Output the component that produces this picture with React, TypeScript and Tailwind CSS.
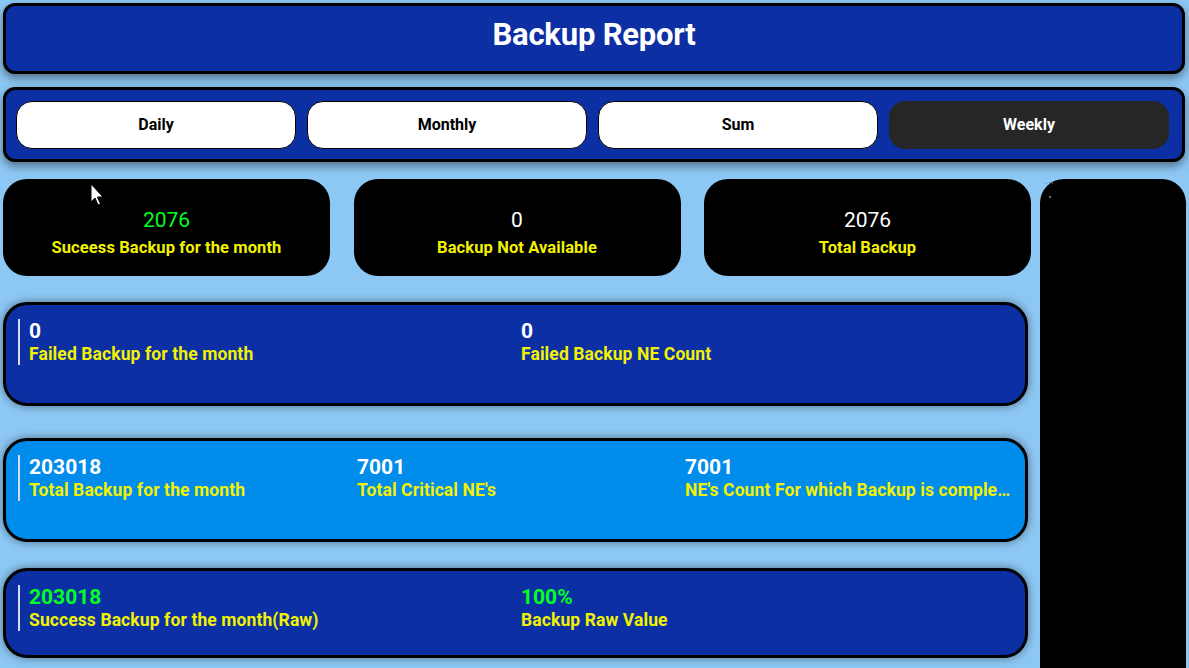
import React from "react";

const font = { fontFamily: "Roboto, 'Open Sans', 'Liberation Sans', sans-serif" };

function Kpi({ value, label, green }: { value: string; label: string; green?: boolean }) {
  return (
    <div className="w-[327px] h-[97px] bg-black rounded-[24px] flex flex-col items-center justify-center pt-[6px]">
      <div className={`text-[21px] leading-[26px] mt-[4px] ${green ? "text-[#00ff22]" : "text-white"}`}>{value}</div>
      <div className="text-[16.5px] leading-[20px] font-bold text-[#f2f200] mt-[5px] tracking-[0.1px]">{label}</div>
    </div>
  );
}

function Item({ value, label, green }: { value: string; label: string; green?: boolean }) {
  return (
    <div className="min-w-0">
      <div className={`text-[21px] leading-[24px] font-bold ${green ? "text-[#00ff22]" : "text-white"}`}>{value}</div>
      <div className="text-[17.5px] leading-[22px] font-bold text-[#f2f200] truncate tracking-[0.1px]">{label}</div>
    </div>
  );
}

function Panel({
  bg,
  h,
  cols,
  items,
}: {
  bg: string;
  h: string;
  cols: string;
  items: { value: string; label: string; green?: boolean }[];
}) {
  return (
    <div className={`${bg} ${h} w-[1025px] border-[3px] border-black rounded-[24px] shadow-[0_0_10px_rgba(0,0,0,0.45)] pl-[12px] pt-[14px] pr-[12px]`}>
      <div className="flex">
        <div className="w-[2px] h-[46px] bg-[#d8dcf0] shrink-0" />
        <div className={`grid ${cols} flex-1 pl-[9px]`}>
          {items.map((it, i) => (
            <Item key={i} {...it} />
          ))}
        </div>
      </div>
    </div>
  );
}

function Tab({ label, active }: { label: string; active?: boolean }) {
  return (
    <div
      className={`w-[280px] h-[48px] rounded-[16px] flex items-center justify-center text-[16px] font-bold ${
        active ? "bg-[#262626] text-white" : "bg-white text-black border border-black"
      }`}
    >
      {label}
    </div>
  );
}

export default function App() {
  return (
    <div style={font} className="w-[1189px] h-[668px] bg-[#8dc8f4] overflow-hidden relative p-[3px]">
      <div className="h-[71px] w-[1182px] bg-[#0c2fa3] border-[3px] border-black rounded-[12px] flex items-center justify-center pb-[6px] shadow-[0_4px_10px_rgba(0,0,0,0.45)]">
        <h1 className="text-white font-bold text-[31px] tracking-[-0.2px]">Backup Report</h1>
      </div>
      <div className="mt-[13px] h-[75px] w-[1182px] bg-[#0c2fa3] border-[3px] border-black rounded-[12px] flex items-center pl-[10px] gap-[11px] shadow-[0_4px_10px_rgba(0,0,0,0.45)]">
        <Tab label="Daily" />
        <Tab label="Monthly" />
        <Tab label="Sum" />
        <Tab label="Weekly" active />
      </div>
      <div className="mt-[17px] flex gap-[9px]">
        <div className="w-[1028px] flex flex-col">
          <div className="flex justify-between">
            <Kpi value="2076" label="Suceess Backup for the month" green />
            <Kpi value="0" label="Backup Not Available" />
            <Kpi value="2076" label="Total Backup" />
          </div>
          <div className="mt-[26px]">
            <Panel
              bg="bg-[#0c2fa3]"
              h="h-[104px]"
              cols="grid-cols-[492px_1fr]"
              items={[
                { value: "0", label: "Failed Backup for the month" },
                { value: "0", label: "Failed Backup NE Count" },
              ]}
            />
          </div>
          <div className="mt-[32px]">
            <Panel
              bg="bg-[#008ceb]"
              h="h-[104px]"
              cols="grid-cols-[328px_328px_1fr]"
              items={[
                { value: "203018", label: "Total Backup for the month" },
                { value: "7001", label: "Total Critical NE's" },
                { value: "7001", label: "NE's Count For which Backup is completed" },
              ]}
            />
          </div>
          <div className="mt-[26px]">
            <Panel
              bg="bg-[#0c2fa3]"
              h="h-[90px]"
              cols="grid-cols-[492px_1fr]"
              items={[
                { value: "203018", label: "Success Backup for the month(Raw)", green: true },
                { value: "100%", label: "Backup Raw Value", green: true },
              ]}
            />
          </div>
        </div>
        <div className="w-[146px] h-[520px] bg-black rounded-[24px] relative">
          <span className="absolute left-[6px] top-[4px] w-[1px] h-[1px] bg-gray-500" />
          <span className="absolute left-[9px] top-[3px] w-[1px] h-[1px] bg-gray-500" />
          <span className="absolute left-[12px] top-[4px] w-[1px] h-[1px] bg-gray-500" />
          <span className="absolute left-[9px] top-[17px] w-[2px] h-[2px] bg-gray-500" />
        </div>
      </div>
      <svg className="absolute left-[90px] top-[183px]" width="16" height="26" viewBox="0 0 16 26">
        <path d="M1 1 L1 19 L5 15 L8 22 L10.5 21 L7.5 14 L13 14 Z" fill="white" stroke="black" strokeWidth="1" />
      </svg>
    </div>
  );
}
